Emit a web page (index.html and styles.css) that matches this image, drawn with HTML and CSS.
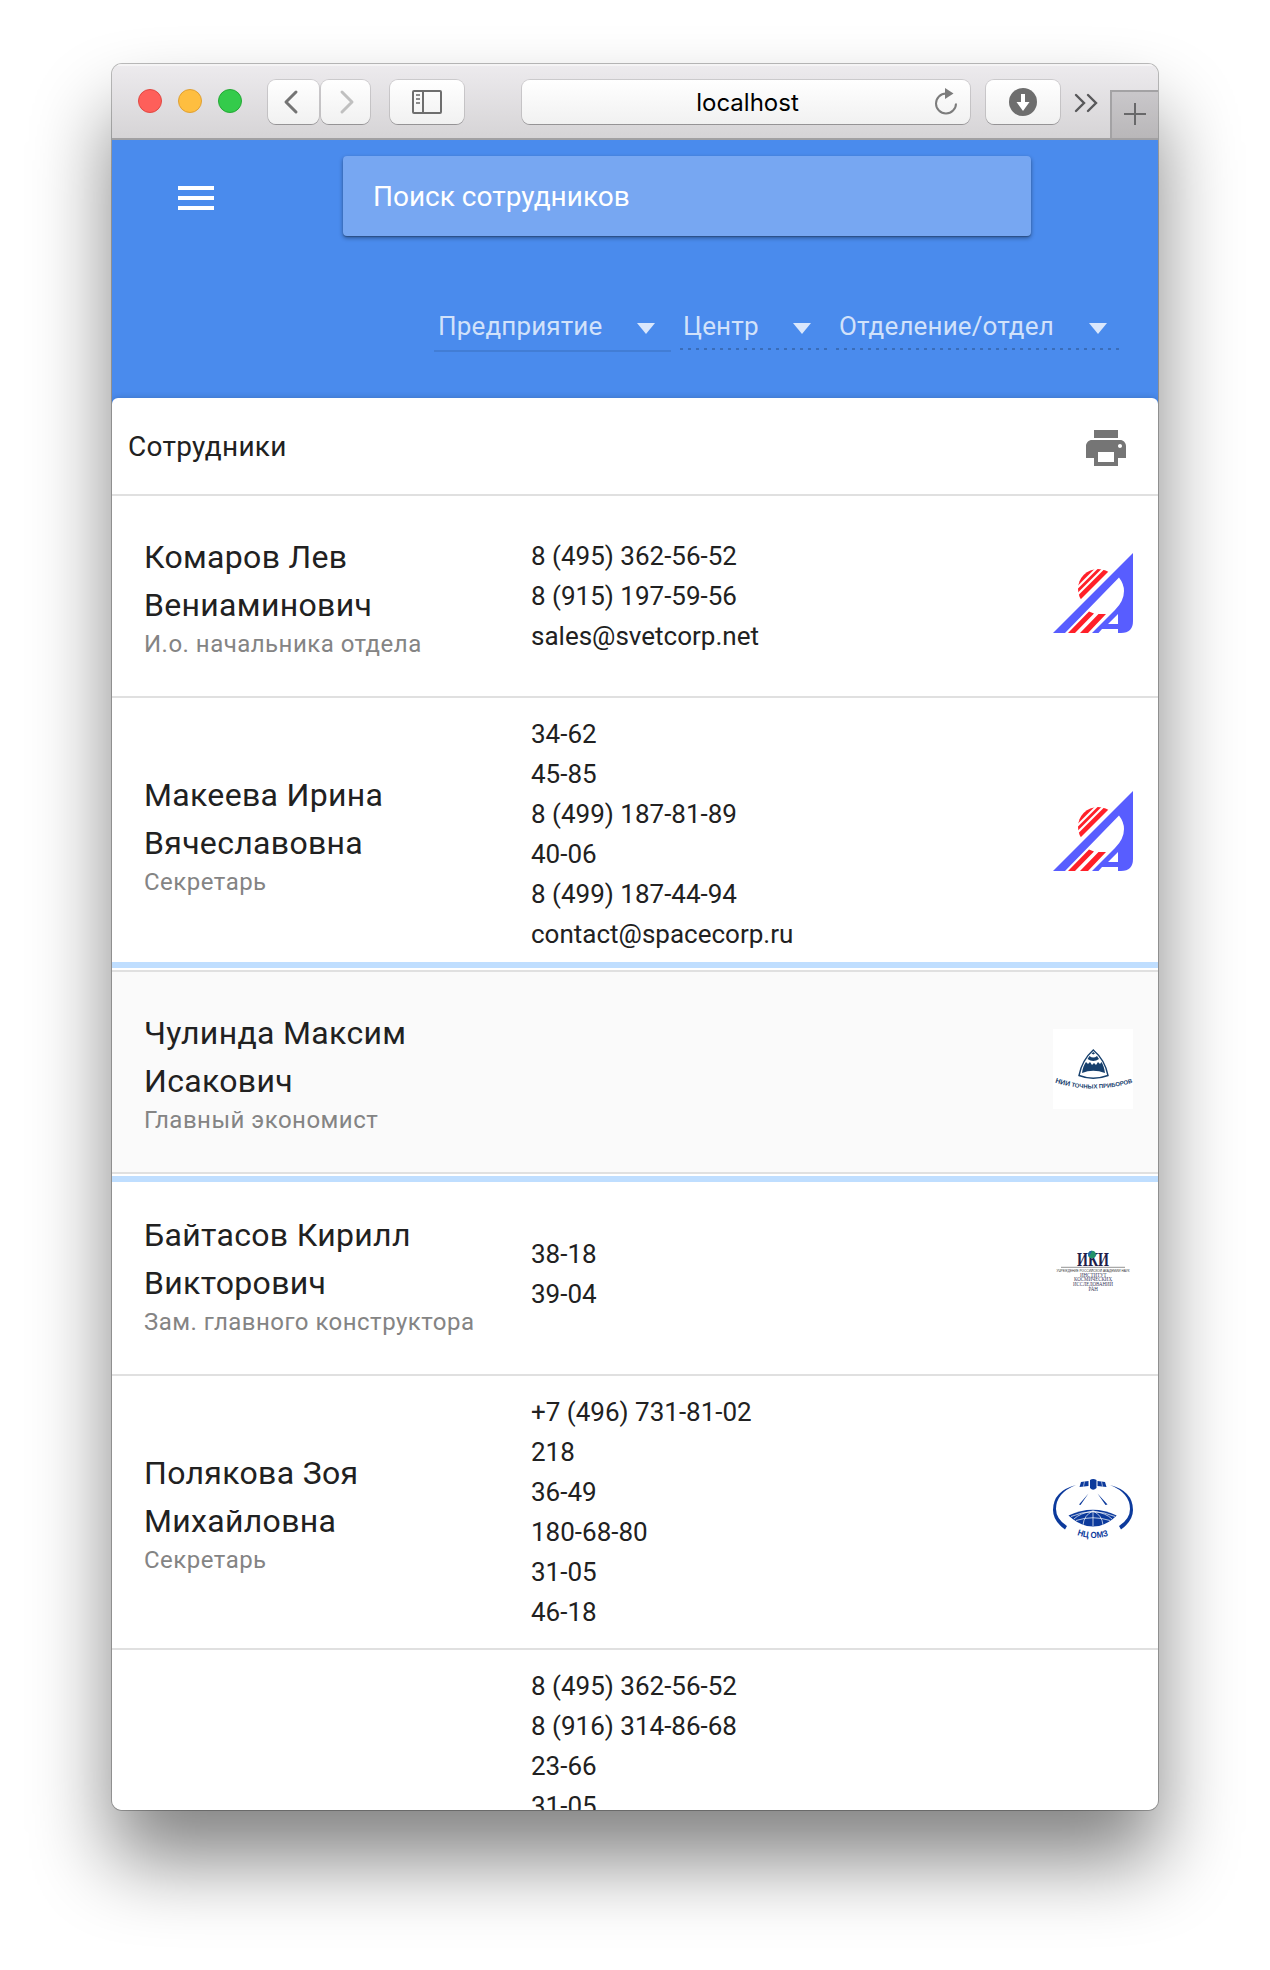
FILE: index.html
```html
<!DOCTYPE html>
<html lang="ru">
<head>
<meta charset="utf-8">
<title>Сотрудники</title>
<link rel="stylesheet" href="styles.css">
</head>
<body>
<svg class="defs" width="0" height="0" aria-hidden="true">
  <defs>
    <clipPath id="disc"><circle cx="45" cy="36" r="20"/></clipPath>
    <symbol id="logo-a" viewBox="0 0 80 80">
      <path fill="#585dff" fill-rule="evenodd" d="M0 80 80 0V68Q80 80 68 80H65V76H49L45.500 80H39L62 57Q71 48 71 38 71 31 66 24.500L12 80ZM65 61 55 71H65Z"/>
      <path clip-path="url(#disc)" fill="#ff2029" d="M20 30 50 0H57.500L20 37.500ZM20 40.500 60.500 0H64.500L20 44.500ZM20 47.500 67.500 0H74L20 54Z"/>
      <path fill="#ff2029" d="M15 80 36 58.500 41 60.500 22 80ZM27 80 45.500 61H53L35 80Z"/>
    </symbol>
  </defs>
</svg>

<main class="window">
  <div class="toolbar">
    <div class="lights"><i class="light red"></i><i class="light yellow"></i><i class="light green"></i></div>
    <div class="nav">
      <span class="btn back"><svg width="16" height="26" viewBox="0 0 16 26"><path d="M13 3 3 13 13 23" fill="none" stroke="#747474" stroke-width="3" stroke-linecap="round" stroke-linejoin="round"/></svg></span>
      <span class="btn forward"><svg width="16" height="26" viewBox="0 0 16 26"><path d="M3 3 13 13 3 23" fill="none" stroke="#c0c0c0" stroke-width="3" stroke-linecap="round" stroke-linejoin="round"/></svg></span>
    </div>
    <span class="btn sidebar"><svg width="30" height="24" viewBox="0 0 30 24"><rect x="1" y="1" width="28" height="22" rx="1" fill="none" stroke="#6e6e6e" stroke-width="2"/><path d="M11 1V23" stroke="#6e6e6e" stroke-width="2"/><path d="M4 5H8M4 9H8M4 13H8" stroke="#8c8c8c" stroke-width="2"/></svg></span>
    <div class="btn address"><span class="host">localhost</span><svg class="reload" width="24" height="28" viewBox="0 0 24 28"><path d="M12 5.500A10 10 0 1 0 22 15.500" fill="none" stroke="#7c7c7c" stroke-width="2"/><path d="M11 0V11L19.500 5.500Z" fill="#7c7c7c"/></svg></div>
    <span class="btn download"><svg width="28" height="28" viewBox="0 0 28 28"><circle cx="14" cy="14" r="14" fill="#6e6e6e"/><path d="M12 6H16V14H20.500L14 23 7.500 14H12Z" fill="#fff"/></svg></span>
    <svg class="more" width="24" height="20" viewBox="0 0 24 20"><path d="M2 2 10 10 2 18M14 2 22 10 14 18" fill="none" stroke="#58585a" stroke-width="2.400" stroke-linecap="round"/></svg>
    <span class="newtab"><svg width="22" height="22" viewBox="0 0 22 22"><path d="M11 0V22M0 11H22" stroke="#68686a" stroke-width="2"/></svg></span>
  </div>

  <header class="header">
    <div class="search-row">
      <svg class="menu" width="48" height="48" viewBox="0 0 24 24"><path fill="#fff" d="M3 18h18v-2H3v2zm0-5h18v-2H3v2zm0-7v2h18V6H3z"/></svg>
      <div class="search">Поиск сотрудников</div>
    </div>
    <div class="filters">
      <div class="filter active"><span>Предприятие</span><svg width="18" height="11" viewBox="0 0 18 11"><path d="M0 0H18L9 11Z"/></svg></div>
      <div class="filter center"><span>Центр</span><svg width="18" height="11" viewBox="0 0 18 11"><path d="M0 0H18L9 11Z"/></svg></div>
      <div class="filter unit"><span>Отделение/отдел</span><svg width="18" height="11" viewBox="0 0 18 11"><path d="M0 0H18L9 11Z"/></svg></div>
    </div>
  </header>

  <section class="card">
    <div class="card-head">
      <h1>Сотрудники</h1>
      <svg width="48" height="48" viewBox="0 0 24 24"><path fill="#757575" d="M19 8H5c-1.660 0-3 1.340-3 3v6h4v4h12v-4h4v-6c0-1.660-1.340-3-3-3zm-3 11H8v-5h8v5zm3-7c-.55 0-1-.45-1-1s.45-1 1-1 1 .45 1 1-.45 1-1 1zm-1-9H6v4h12V3z"/></svg>
    </div>

    <article class="row">
      <div class="person"><div class="name">Комаров Лев<br>Вениаминович</div><div class="post">И.о. начальника отдела</div></div>
      <div class="contacts">8 (495) 362-56-52<br>8 (915) 197-59-56<br>sales@svetcorp.net</div>
      <svg class="logo"><use href="#logo-a"/></svg>
    </article>

    <article class="row">
      <div class="person"><div class="name">Макеева Ирина<br>Вячеславовна</div><div class="post">Секретарь</div></div>
      <div class="contacts">34-62<br>45-85<br>8 (499) 187-81-89<br>40-06<br>8 (499) 187-44-94<br>contact@spacecorp.ru</div>
      <svg class="logo"><use href="#logo-a"/></svg>
    </article>

    <article class="row selected">
      <div class="person"><div class="name">Чулинда Максим<br>Исакович</div><div class="post">Главный экономист</div></div>
      <div class="contacts"></div>
      <svg class="logo" viewBox="0 0 80 80">
        <rect width="80" height="80" fill="#fff"/>
        <path d="M40.300 21Q29 31 26 46.500 40 52 55 46.500 52 31 40.300 21Z" fill="#fff" stroke="#17406d" stroke-width="1.400"/>
        <path d="M29 44Q30 37 33 33L35 35 37 33 39 36 41 34 43 36 45 33 47 35 48.500 33Q51 37 52 44 40 39.500 29 44Z" fill="#17406d"/>
        <path d="M36.500 27Q40.300 30 44 27L46 30Q40.300 34 34.500 30ZM38.500 24.500 40.300 23 42 24.500 40.300 25.500Z" fill="#17406d"/>
        <path id="curve" d="M2 53.500Q40 66 84 52.500" fill="none"/>
        <text class="precise"><textPath href="#curve" textLength="79" lengthAdjust="spacingAndGlyphs"><tspan font-size="7">НИИ</tspan> ТОЧНЫХ ПРИБОРОВ</textPath></text>
      </svg>
    </article>

    <article class="row">
      <div class="person"><div class="name">Байтасов Кирилл<br>Викторович</div><div class="post">Зам. главного конструктора</div></div>
      <div class="contacts">38-18<br>39-04</div>
      <svg class="logo iki" viewBox="0 0 80 80">
        <text class="iki-title" x="24" y="35" textLength="32" lengthAdjust="spacingAndGlyphs">ИКИ</text>
        <circle cx="39" cy="23.500" r="3.800" fill="#23946a"/><path d="M36 26A3.800 3.800 0 0 1 39 19.700Z" fill="#2264a8"/>
        <path d="M8 36.300H72" stroke="#777" stroke-width=".8"/>
        <text class="iki-sub" x="3.500" y="40.800" textLength="73" lengthAdjust="spacingAndGlyphs">УЧРЕЖДЕНИЕ РОССИЙСКОЙ АКАДЕМИИ НАУК</text>
        <text x="27" y="45.700" textLength="26.500" lengthAdjust="spacingAndGlyphs">ИНСТИТУТ</text>
        <text x="21" y="50.400" textLength="38" lengthAdjust="spacingAndGlyphs">КОСМИЧЕСКИХ</text>
        <text x="20" y="55.100" textLength="40" lengthAdjust="spacingAndGlyphs">ИССЛЕДОВАНИЙ</text>
        <text x="35.500" y="60" textLength="9.500" lengthAdjust="spacingAndGlyphs">РАН</text>
      </svg>
    </article>

    <article class="row">
      <div class="person"><div class="name">Полякова Зоя<br>Михайловна</div><div class="post">Секретарь</div></div>
      <div class="contacts">+7 (496) 731-81-02<br>218<br>36-49<br>180-68-80<br>31-05<br>46-18</div>
      <svg class="logo omz" viewBox="0 0 80 80">
        <path d="M23 16Q0 22 0 41 0 52 12 60.500L14 57Q3 50 3 40 3 24 23 16ZM57 16Q80 22 80 41 80 52 68 60.500L66 57Q77 50 77 40 77 24 57 16Z"/>
        <path d="M37 11Q40 9 43.500 11V19Q40 22.500 37 19ZM28 13 35.500 12V17L26.500 18ZM52 13 44.500 12V17L53.500 18Z"/>
        <path d="M31.500 12.500 30.500 17.500M48.500 12.500 49.500 17.500" stroke="#fff" stroke-width=".6"/>
        <path d="M35.500 24.500 27.500 36 26 35.500ZM44.500 24.500 54.500 35.500 52.500 36Z"/>
        <path d="M15.500 46.500Q40 35 63.700 46.500 53 57.500 40 57.500 27 57.500 15.500 46.500Z"/>
        <path d="M18 47.500Q40 38 62 47.500M23 51.500Q40 46 57 51.500M40 42V57M40 42Q31 46 30 56M40 42Q49 46 50 56M40 42Q27 44 21 50M40 42Q53 44 59 50" fill="none" stroke="#fff" stroke-width=".7"/>
        <path id="omz-curve" d="M24 66Q40 72 58 66" fill="none"/>
        <text><textPath href="#omz-curve" textLength="32" lengthAdjust="spacingAndGlyphs">НЦ ОМЗ</textPath></text>
      </svg>
    </article>

    <article class="row last">
      <div class="person"></div>
      <div class="contacts">8 (495) 362-56-52<br>8 (916) 314-86-68<br>23-66<br>31-05</div>
    </article>
  </section>
</main>
</body>
</html>
```

FILE: styles.css
```css
* { box-sizing: border-box; }

body {
  margin: 0;
  height: 1970px;
  overflow: hidden;
  background: #fff;
  color: #212121;
  font-family: Roboto, sans-serif;
}

svg { display: block; flex: none; }
.defs { position: absolute; }

.window {
  width: 1046px;
  height: 1746px;
  margin: 64px 0 0 112px;
  overflow: hidden;
  border-radius: 10px;
  background: #fff;
  box-shadow: 0 0 0 1px rgba(0, 0, 0, .26), 0 50px 80px rgba(0, 0, 0, .49);
}

/* browser toolbar */
.toolbar {
  display: flex;
  align-items: flex-start;
  height: 76px;
  padding: 16px 0 0 26px;
  border-bottom: 2px solid #a1a0a2;
  background: linear-gradient(#edebee, #d6d4d6);
  box-shadow: inset 0 2px 0 #f5f4f5;
}

.lights { display: flex; gap: 16px; margin: 9px 26px 0 0; }
.light { width: 24px; height: 24px; border-radius: 50%; border: 1px solid; }
.red { background: #fe5f5a; border-color: #e14842; }
.yellow { background: #febe40; border-color: #e0a033; }
.green { background: #34cb4b; border-color: #25a935; }

.btn {
  display: flex;
  align-items: center;
  justify-content: center;
  height: 44px;
  border-radius: 8px;
  background: linear-gradient(#fff, #f1f1f1);
  box-shadow: 0 0 0 1px rgba(0, 0, 0, .12), 0 1px 0 rgba(0, 0, 0, .22);
}
.nav { display: flex; gap: 2px; }
.back { width: 51px; padding-right: 6px; }
.forward { width: 49px; padding-left: 2px; }
.sidebar { width: 74px; margin-left: 20px; }
.address { width: 448px; margin-left: 58px; padding: 2px 0 0 3px; position: relative; }
.host { color: #000; font: 24px/44px Inter, sans-serif; }
.address .reload { position: absolute; right: 12px; top: 8px; }
.download { width: 74px; margin-left: 16px; }
.more { margin: 13px 12px 0 14px; }
.newtab {
  display: flex;
  justify-content: center;
  flex: 1;
  height: 48px;
  margin-top: 10px;
  padding-top: 11px;
  border: solid #a3a2a4;
  border-width: 2px 0 0 2px;
  background: linear-gradient(#c9c7ca, #b9b7b9);
}

/* application header */
.header { height: 264px; background: #4a8bed; }
.search-row { display: flex; padding: 16px 0 0 60px; }
.menu { margin: 18px 123px 0 0; }
.search {
  width: 688px;
  height: 80px;
  padding-left: 30px;
  border-radius: 4px;
  background: #77a7f2;
  color: #fff;
  font-size: 28px;
  line-height: 82px;
  box-shadow: 0 2px 4px rgba(0, 0, 0, .38), 0 1px 1px rgba(0, 0, 0, .2);
}
.filters { display: flex; gap: 9px; padding: 66px 0 0 322px; }
.filter {
  display: flex;
  align-items: center;
  justify-content: space-between;
  height: 48px;
  padding: 2px 16px 2px 3px;
  color: rgba(255, 255, 255, .76);
  font-size: 26px;
  letter-spacing: .15px;
  background: linear-gradient(to right, #3a6db9 0 33%, transparent 0) 0 100% / 8px 2px repeat-x;
}
.filter svg { fill: #dae7fc; margin-top: 4px; }
.filter.active { width: 237px; height: 50px; padding: 2px 16px 2px 4px; background: none; border-bottom: 2px solid #427dd5; }
.filter.center { width: 147px; }
.filter.unit { width: 283px; padding-right: 12px; }

/* employee list */
.card {
  margin-top: -6px;
  border-radius: 6px 6px 0 0;
  background: #fff;
  box-shadow: 0 0 6px rgba(0, 0, 0, .2);
}
.card-head {
  display: flex;
  align-items: center;
  justify-content: space-between;
  height: 98px;
  padding: 0 28px 0 16px;
  border-bottom: 2px solid #e0e0e0;
}
.card-head h1 { margin: 0; font-size: 28px; font-weight: 400; letter-spacing: .28px; }
.card-head svg { margin-top: 4px; }
.row {
  display: flex;
  align-items: center;
  min-height: 202px;
  padding: 16px 25px 16px 32px;
  border-bottom: 2px solid #e0e0e0;
}
.last { align-items: flex-start; }
.selected {
  position: relative;
  background: #fafafa;
  box-shadow: 0 -2px 0 #e0e0e0, 0 -4px 0 #fff, 0 -10px 0 #bfdeff, 0 2px 0 #fff, 0 8px 0 #bfdeff;
}
.person { width: 387px; }
.name { font-size: 32px; line-height: 48px; letter-spacing: .32px; white-space: nowrap; }
.post { color: #848484; font-size: 24px; line-height: 30px; letter-spacing: .48px; white-space: nowrap; }
.contacts { flex: 1; font-size: 26px; line-height: 40px; }
.logo { width: 80px; height: 80px; margin-bottom: 6px; overflow: visible; }

.precise { fill: #17406d; font: 700 6px "Liberation Sans", sans-serif; }
.iki text { fill: #3b3a5c; font: 5.500px "Liberation Serif", serif; }
.iki .iki-title { fill: #211d49; font-size: 18px; font-weight: 700; }
.iki .iki-sub { fill: #333; font: 3.800px "Liberation Sans", sans-serif; }
.omz { fill: #0c3a9c; }
.omz text { font: 700 8.800px "Liberation Sans", sans-serif; }
```
